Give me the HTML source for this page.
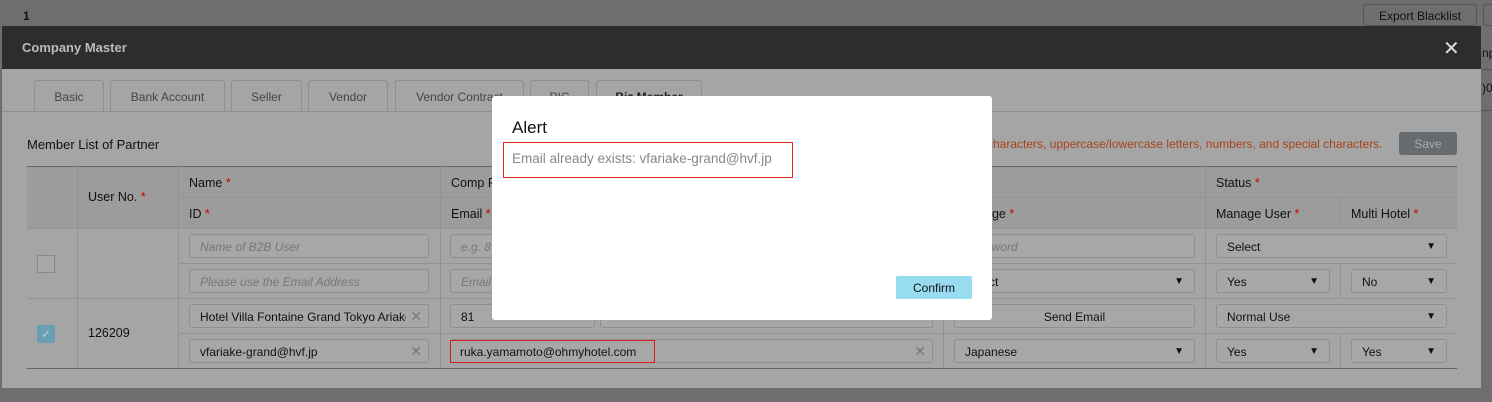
<!DOCTYPE html>
<html><head><meta charset="utf-8"><style>
*{box-sizing:border-box;margin:0;padding:0}
body{width:1492px;height:402px;background:#6e6e6e;font-family:"Liberation Sans",sans-serif;font-size:12px;color:#111;position:relative;overflow:hidden}
.a{position:absolute}
.hd{left:2px;top:26px;width:1479px;height:43px;background:#2d2d2d;color:#bbb;font-weight:bold;font-size:13px;padding:14px 0 0 20px}
.body{left:2px;top:69px;width:1479px;height:319px;background:#a5a5a5}
.tab{top:80px;height:32px;border:1px solid #8f8f8f;border-bottom:none;border-radius:3px 3px 0 0;color:#444;font-size:12px;text-align:center;padding-top:9px;background:#a5a5a5}
.inp{height:24px;border:1px solid #8f8f8f;border-radius:3px;background:#a7a7a7;padding:5px 10px;font-size:12px;color:#111;white-space:nowrap;overflow:hidden}
.ph{color:#777;font-style:italic}
.sel::after{content:"▼";position:absolute;right:10px;top:6px;font-size:10px;color:#111}
.x{position:absolute;right:6px;top:3px;color:#777;font-size:14px;background:#a7a7a7}
.hl{background:#888;height:1px}
.vl{background:#939393;width:1px}
.th{font-size:12.5px;color:#111}
.r{color:#c00}
</style></head><body>
<div class="a" style="left:23px;top:9px;font-weight:bold;font-size:12px">1</div>
<div class="a" style="left:1363px;top:4px;width:114px;height:22px;border:1px solid #555;border-radius:3px;font-size:12px;text-align:center;padding-top:4px;color:#111">Export Blacklist</div>
<div class="a" style="left:1483px;top:4px;width:12px;height:22px;border:1px solid #555;border-radius:3px"></div>
<div class="a" style="left:1482px;top:46px;font-size:12px;color:#111">np</div>
<div class="a" style="left:1482px;top:81px;font-size:12px;color:#111">)0</div>
<div class="a" style="left:1482px;top:69px;width:10px;height:1px;background:#555"></div>
<div class="a" style="left:1482px;top:110px;width:10px;height:1px;background:#555"></div>

<div class="a hd">Company Master</div>
<div class="a" style="left:1443px;top:36px;color:#ddd;font-size:20px">✕</div>
<div class="a body"></div>
<div class="a tab" style="left:34px;width:70px">Basic</div>
<div class="a tab" style="left:110px;width:115px">Bank Account</div>
<div class="a tab" style="left:231px;width:71px">Seller</div>
<div class="a tab" style="left:308px;width:80px">Vendor</div>
<div class="a tab" style="left:395px;width:129px">Vendor Contract</div>
<div class="a tab" style="left:530px;width:59px">PIC</div>
<div class="a tab" style="left:596px;width:106px;font-weight:bold;color:#222">Biz Member</div>
<div class="a" style="left:2px;top:111px;width:1479px;height:1px;background:#8f8f8f"></div>
<div class="a" style="left:27px;top:137px;font-size:13px">Member List of Partner</div>
<div class="a" style="left:987px;top:137px;font-size:12px;color:#a8441c">characters, uppercase/lowercase letters, numbers, and special characters.</div>
<div class="a" style="left:1399px;top:132px;width:58px;height:23px;background:#666b70;border-radius:3px;color:#aaa;text-align:center;padding-top:5px">Save</div>

<div class="a" style="left:27px;top:166px;width:1430px;height:62px;background:#9c9c9c"></div>
<div class="a hl" style="left:27px;top:166px;width:1430px;background:#666"></div>
<div class="a hl" style="left:178px;top:197px;width:1279px;background:#939393"></div>
<div class="a hl" style="left:27px;top:228px;width:1430px;background:#939393"></div>
<div class="a hl" style="left:178px;top:263px;width:1279px;background:#939393"></div>
<div class="a hl" style="left:27px;top:298px;width:1430px;background:#939393"></div>
<div class="a hl" style="left:178px;top:333px;width:1279px;background:#939393"></div>
<div class="a hl" style="left:27px;top:368px;width:1430px;background:#666"></div>
<div class="a vl" style="left:77px;top:166px;height:202px"></div>
<div class="a vl" style="left:178px;top:166px;height:202px"></div>
<div class="a vl" style="left:440px;top:166px;height:202px"></div>
<div class="a vl" style="left:943px;top:166px;height:202px"></div>
<div class="a vl" style="left:1205px;top:166px;height:202px"></div>
<div class="a vl" style="left:1340px;top:197px;height:31px"></div>
<div class="a vl" style="left:1340px;top:263px;height:35px"></div>
<div class="a vl" style="left:1340px;top:333px;height:35px"></div>

<div class="a th" style="left:88px;top:190px">User No. <span class="r">*</span></div>
<div class="a th" style="left:189px;top:176px">Name <span class="r">*</span></div>
<div class="a th" style="left:189px;top:207px">ID <span class="r">*</span></div>
<div class="a th" style="left:451px;top:176px">Comp P</div>
<div class="a th" style="left:451px;top:207px">Email <span class="r">*</span></div>
<div class="a th" style="left:985px;top:207px">age <span class="r">*</span></div>
<div class="a th" style="left:1216px;top:176px">Status <span class="r">*</span></div>
<div class="a th" style="left:1216px;top:207px">Manage User <span class="r">*</span></div>
<div class="a th" style="left:1351px;top:207px">Multi Hotel <span class="r">*</span></div>

<div class="a" style="left:37px;top:255px;width:18px;height:18px;border:1px solid #888;background:#a7a7a7"></div>
<div class="a" style="left:37px;top:325px;width:18px;height:18px;background:#6a9fb3;color:#b5d3dd;font-size:12px;text-align:center;line-height:18px">✓</div>
<div class="a" style="left:88px;top:326px;font-size:12.5px">126209</div>

<div class="a inp ph" style="left:189px;top:234px;width:240px">Name of B2B User</div>
<div class="a inp ph" style="left:189px;top:269px;width:240px">Please use the Email Address</div>
<div class="a inp" style="left:189px;top:304px;width:240px;padding-right:26px">Hotel Villa Fontaine Grand Tokyo Ariake<span class="x">&nbsp;✕</span></div>
<div class="a inp" style="left:189px;top:339px;width:240px">vfariake-grand@hvf.jp<span class="x">✕</span></div>
<div class="a inp ph" style="left:450px;top:234px;width:60px">e.g. 8</div>
<div class="a inp ph" style="left:450px;top:269px;width:60px">Email</div>
<div class="a inp" style="left:450px;top:304px;width:145px">81</div>
<div class="a inp" style="left:600px;top:304px;width:333px"></div>
<div class="a inp" style="left:450px;top:339px;width:483px"><span class="x">✕</span></div>
<div class="a" style="left:450px;top:340px;width:205px;height:23px;border:1px solid #d42020;padding:4px 9px;font-size:12px">ruka.yamamoto@ohmyhotel.com</div>
<div class="a inp ph" style="left:954px;top:234px;width:241px">Password</div>
<div class="a inp sel" style="left:954px;top:269px;width:241px">Select</div>
<div class="a inp" style="left:954px;top:304px;width:241px;text-align:center">Send Email</div>
<div class="a inp sel" style="left:954px;top:339px;width:241px">Japanese</div>
<div class="a inp sel" style="left:1216px;top:234px;width:231px">Select</div>
<div class="a inp sel" style="left:1216px;top:269px;width:114px">Yes</div>
<div class="a inp sel" style="left:1351px;top:269px;width:96px">No</div>
<div class="a inp sel" style="left:1216px;top:304px;width:231px">Normal Use</div>
<div class="a inp sel" style="left:1216px;top:339px;width:114px">Yes</div>
<div class="a inp sel" style="left:1351px;top:339px;width:96px">Yes</div>

<div class="a" style="left:492px;top:96px;width:500px;height:224px;background:#fff;border-radius:3px"></div>
<div class="a" style="left:512px;top:118px;font-size:17px;color:#111">Alert</div>
<div class="a" style="left:503px;top:142px;width:290px;height:36px;border:1px solid #e02424;padding:8px 8px;font-size:13.5px;color:#888">Email already exists: vfariake-grand@hvf.jp</div>
<div class="a" style="left:896px;top:276px;width:76px;height:23px;background:#97dcf0;border-radius:2px;text-align:center;padding-top:5px;font-size:12px;color:#111">Confirm</div>
</body></html>
